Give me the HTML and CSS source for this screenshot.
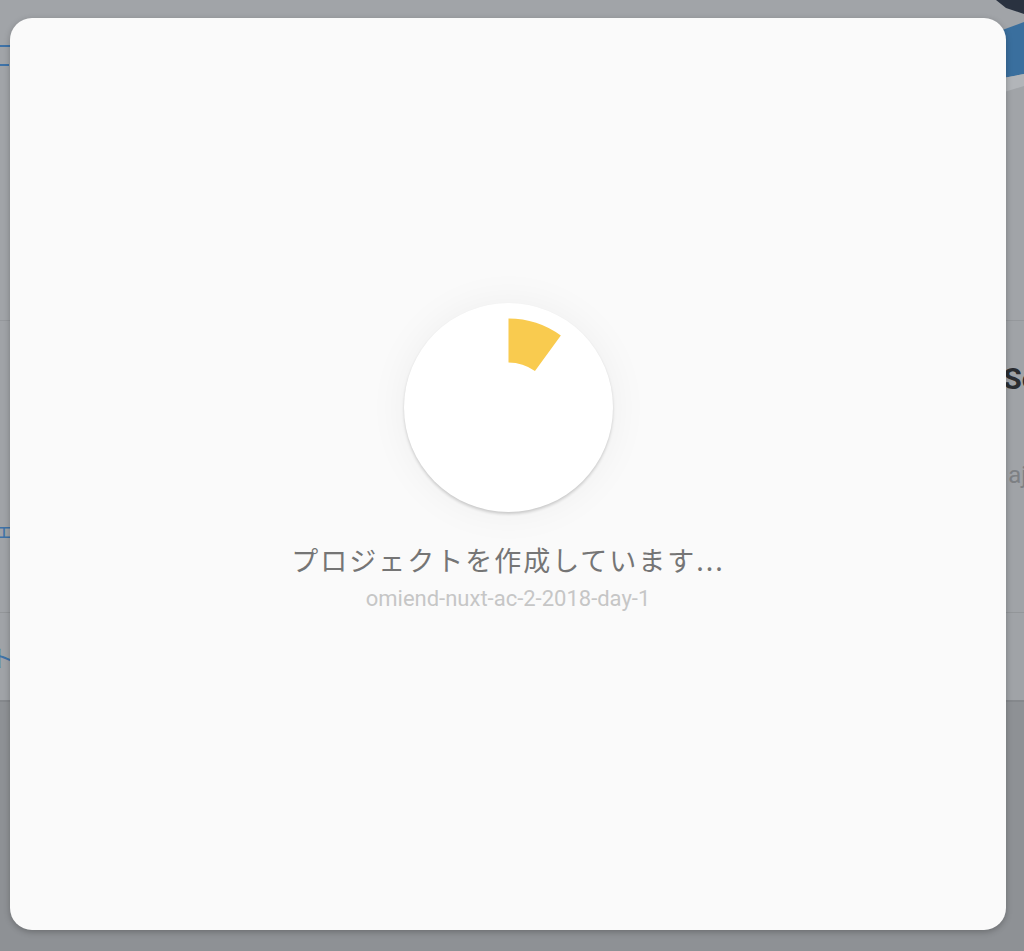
FILE: index.html
```html
<!DOCTYPE html>
<html lang="ja">
<head>
<meta charset="utf-8">
<title>プロジェクトを作成しています</title>
<link rel="stylesheet" href="styles.css">
</head>
<body>
<div class="page">
  <div class="bg-top">
    <div class="bg-left">
      <div class="bg-link l1"></div>
      <div class="bg-link l2"></div>
    </div>
    <svg class="bg-art" width="40" height="120" viewBox="0 0 40 120">
      <polygon points="12,0 40,0 40,14 22,8" fill="#2a3240"/>
      <polygon points="2,36 40,22 40,74 8,80" fill="#3a6f9e"/>
      <polygon points="8,80 40,74 40,86 14,94" fill="#b2b5b9"/>
    </svg>
  </div>
  <div class="bg-section">
    <div class="bg-row">
      <span class="bg-left-text t1">ェ/</span>
      <span class="bg-right-title">Se</span>
    </div>
    <div class="bg-row2">
      <span class="bg-right-sub">aj</span>
    </div>
  </div>
  <div class="bg-section2">
    <span class="bg-left-text t2">ト</span>
  </div>
  <div class="bg-bottom"></div>

  <div class="modal">
    <div class="spinner">
      <svg width="209" height="209" viewBox="0 0 209 209">
        <path d="M104.5 37.5 A67 67 0 0 1 143.9 50.3" fill="none" stroke="#f9cb4f" stroke-width="44"/>
      </svg>
    </div>
    <div class="title">プロジェクトを作成しています...</div>
    <div class="sub">omiend-nuxt-ac-2-2018-day-1</div>
  </div>
</div>
</body>
</html>
```
FILE: styles.css
```css
html, body {
  margin: 0;
  padding: 0;
}
body {
  width: 1024px;
  height: 951px;
  overflow: hidden;
  background: #8e9195;
  font-family: "Roboto", "Noto Sans CJK JP", sans-serif;
}
.page {
  position: relative;
  width: 1024px;
  height: 951px;
}
.bg-top {
  height: 320px;
  background: #a1a4a8;
  border-bottom: 1px solid #95989c;
  display: flex;
  justify-content: space-between;
}
.bg-left {
  width: 12px;
  display: flex;
  flex-direction: column;
}
.bg-link {
  height: 2px;
  background: #3f73a8;
}
.l1 { margin-top: 45px; width: 10px; }
.l2 { margin-top: 17px; width: 9px; }
.bg-art {
  display: block;
}
.bg-section {
  height: 291px;
  background: #a0a3a7;
  border-bottom: 1px solid #939699;
  display: flex;
  flex-direction: column;
}
.bg-row {
  display: flex;
  justify-content: space-between;
  align-items: flex-start;
  height: 150px;
}
.bg-left-text {
  font-family: "Noto Sans CJK JP", sans-serif;
  color: #3f73a8;
  font-size: 20px;
}
.t1 {
  margin-top: 194px;
  margin-left: -6px;
}
.bg-right-title {
  margin-top: 40px;
  margin-right: -14px;
  font-size: 30px;
  font-weight: 700;
  color: #2a2d31;
  font-family: "Roboto", sans-serif;
}
.bg-row2 {
  display: flex;
  justify-content: flex-end;
}
.bg-right-sub {
  margin-top: -10px;
  margin-right: -3px;
  font-size: 24px;
  color: #7d8084;
  font-family: "Roboto", sans-serif;
}
.bg-section2 {
  height: 87px;
  background: #a0a3a7;
  border-bottom: 2px solid #85888c;
}
.t2 {
  display: inline-block;
  margin-top: 26px;
  margin-left: -10px;
  font-size: 24px;
}
.bg-bottom {
  height: 250px;
  background: #8e9195;
}
.modal {
  position: absolute;
  top: 18px;
  left: 10px;
  width: 996px;
  height: 912px;
  box-sizing: border-box;
  background: #fafafa;
  border-radius: 22px;
  box-shadow: 0 2px 6px rgba(0, 0, 0, 0.25);
  display: flex;
  flex-direction: column;
  align-items: center;
  padding-top: 285px;
}
.spinner {
  width: 209px;
  height: 209px;
  border-radius: 50%;
  background: #ffffff;
  box-shadow: 0 2px 3px rgba(0, 0, 0, 0.18), 0 0 40px rgba(0, 0, 0, 0.05);
}
.spinner svg {
  display: block;
}
.title {
  margin-top: 28px;
  font-family: "Noto Sans CJK JP", sans-serif;
  font-size: 27px;
  line-height: 40px;
  color: #757575;
  letter-spacing: 2px;
}
.sub {
  margin-top: 5px;
  font-family: "Roboto", sans-serif;
  font-size: 22px;
  line-height: 28px;
  color: #c6c6c6;
}
```
